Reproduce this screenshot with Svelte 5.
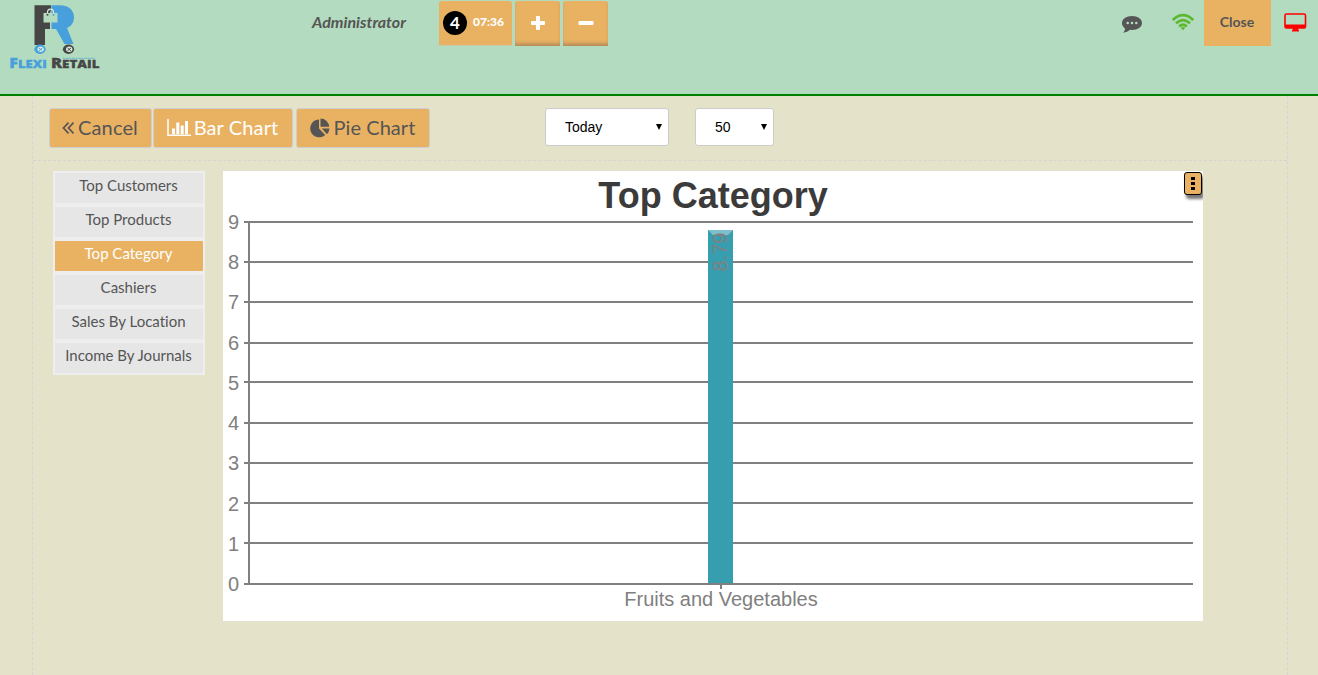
<script>
  const reports = ['Top Customers', 'Top Products', 'Top Category', 'Cashiers', 'Sales By Location', 'Income By Journals'];
  let active = $state('Top Category');
  const ticks = [
    { v: 9, y: 51, label: 58 }, { v: 8, y: 91, label: 98 }, { v: 7, y: 131, label: 138 }, { v: 6, y: 172, label: 179 },
    { v: 5, y: 211, label: 219 }, { v: 4, y: 252, label: 259 }, { v: 3, y: 292, label: 299 }, { v: 2, y: 332, label: 340 },
    { v: 1, y: 372, label: 380 }, { v: 0, y: 413, label: 420 }
  ];
</script>

<header>
  <svg class="logo" width="110" height="80" viewBox="0 0 110 80">
    <path d="M34.500 5.300H51V10l-1 3h-6v9h6v7H45V45H34.500z" fill="#464646" />
    <path d="M51.500 5.300H60c9 0 14 5 14 12 0 5-2.500 9-7 10.700L73.500 44H64.500l-8.500-15h-4.500z" fill="#479fdb" />
    <path d="M43.500 13h14v9.500h-14z" fill="#b3dbbf" />
    <path d="M47.500 14.500V12.500c0-4.500 6-4.500 6 0v2" fill="none" stroke="#d9eee0" stroke-width="1.200" />
    <circle cx="47.500" cy="14.800" r="1" fill="#464646" /><circle cx="53.500" cy="14.800" r="1" fill="#479fdb" />
    {#each [{ x: 40, c: '#479fdb' }, { x: 68.500, c: '#464646' }] as wheel}
      <ellipse cx={wheel.x} cy="49.300" rx="5.600" ry="4.700" fill={wheel.c} />
      <ellipse cx={wheel.x + 0.7} cy="49.300" rx="3.200" ry="2.700" fill="#d5ece0" />
      <path d="M{wheel.x - 1} 48l3.400 2.800m-3.400 0l3.400-2.800" stroke={wheel.c} stroke-width="1" />
    {/each}
    <g class="wordmark">
      <text x="9.300" y="67.700" font-size="13.500" fill="#479fdb" stroke="#479fdb" textLength="37.500" lengthAdjust="spacingAndGlyphs">F<tspan font-size="11">LEXI</tspan></text>
      <text x="51" y="67.700" font-size="13.500" fill="#464646" stroke="#464646" textLength="48.500" lengthAdjust="spacingAndGlyphs">R<tspan font-size="11">ETAIL</tspan></text>
    </g>
    <path d="M63 58.300h32" stroke="#479fdb" stroke-width="1.200" stroke-dasharray="2 .7 3 .5" opacity=".5" />
  </svg>
  <span class="user">Administrator</span>
  <div class="orders">
    <button class="order"><span class="num">4</span><span class="time">07:36</span></button>
    <button class="square" aria-label="New order"><svg width="16" height="16"><path d="M7 1h2q1 0 1 1v4h4q1 0 1 1v2q0 1-1 1h-4v4q0 1-1 1H7q-1 0-1-1v-4H2q-1 0-1-1V7q0-1 1-1h4V2q0-1 1-1z" fill="#fff" /></svg></button>
    <button class="square" aria-label="Remove order"><svg width="16" height="16"><rect x=".5" y="6" width="15" height="4" rx="1" fill="#fff" /></svg></button>
  </div>
  <div class="status">
    <svg class="chat" width="22" height="20" viewBox="0 0 22 20">
      <path d="M11 2c5.700 0 10 3.200 10 7s-4.300 7-10 7l-2-.2C7.500 17.300 5 18.500 2 18.800c1-1 1.800-2 2-4.300C2 13 1 11.200 1 9c0-3.800 4.300-7 10-7z" fill="#555" />
      <circle cx="6.700" cy="9" r="1.300" fill="#b3dbbf" /><circle cx="11" cy="9" r="1.300" fill="#b3dbbf" /><circle cx="15.300" cy="9" r="1.300" fill="#b3dbbf" />
    </svg>
    <svg class="wifi" width="24" height="18" viewBox="0 0 24 18">
      <g fill="none" stroke="#5cb830" stroke-width="2.800"><path d="M1.800 6.900q10.200-9.600 20.400 0M5 10.300q7-6.400 14 0M8.200 13.600q3.800-3.600 7.600 0" /></g>
      <path d="M9.700 14.800q2.300-1.800 4.600 0L12 17.300z" fill="#5cb830" />
    </svg>
    <button class="close">Close</button>
    <svg class="screen" width="24" height="20" viewBox="0 0 24 20">
      <rect x="2" y="2" width="20.500" height="14" rx="1.500" fill="none" stroke="#f00" stroke-width="1.600" />
      <path d="M2 12.500h20.500V16H2zM10 16h5l.5 2H16v1.500H9V18h.5z" fill="#f00" />
    </svg>
  </div>
</header>

<main>
  <div class="toolbar">
    <button class="tool"><svg width="13" height="14" viewBox="0 0 13 14"><path d="M6.500 1.700L1.500 7l5 5.300M11.500 1.700L6.500 7l5 5.300" fill="none" stroke="#555" stroke-width="1.700" /></svg><span>Cancel</span></button>
    <button class="tool bar"><svg width="24" height="18" viewBox="0 0 24 18"><path d="M1 0v16.300h23" fill="none" stroke="#fff" stroke-width="1.500" /><path d="M5 9.500h3V15H5zm4.300-6h3V15h-3zm4.400 3h3V15h-3zM18 2h3v13h-3z" fill="#fff" /></svg><span>Bar Chart</span></button>
    <button class="tool pie"><svg width="20" height="20" viewBox="0 0 20 20"><path d="M9 1.500V10.500l6.200 6.400A8.900 8.900 0 1 1 9 1.500z" fill="#555" /><path d="M10.500 .5a8.700 8.700 0 0 1 8.700 8.300h-8.700zM11.800 10.500h7.700a8.500 8.500 0 0 1-2.600 5.700z" fill="#555" /></svg><span>Pie Chart</span></button>
    <div class="select period"><span>Today</span><svg width="6" height="6"><path d="M0 0h6L3 6z" /></svg></div>
    <div class="select limit"><span>50</span><svg width="6" height="6"><path d="M0 0h6L3 6z" /></svg></div>
  </div>
  <div class="content">
    <nav>
      {#each reports as report}
        <button class:active={report === active} onclick={() => (active = report)}>{report}</button>
      {/each}
    </nav>
    <section>
      <svg class="chart" width="980" height="450" viewBox="0 0 980 450">
        <text class="title" x="490" y="37" text-anchor="middle">Top Category</text>
        {#each ticks as tick}
          <path d="M21 {tick.y}h949" stroke="#808080" stroke-width="2" />
          <text x="16" y={tick.label} text-anchor="end">{tick.v}</text>
        {/each}
        <path d="M26 51v362M498 413v5" stroke="#808080" stroke-width="2" />
        <path d="M485 59h25v353h-25z" fill="#379eaf" />
        <path d="M485 59h25l-5 5h-15z" fill="#7dbfca" />
        <text class="value" transform="translate(504 100.500) rotate(-90)">8.79</text>
        <text x="498" y="435" text-anchor="middle">Fruits and Vegetables</text>
      </svg>
      <button class="menu" aria-label="Chart menu"><i></i><i></i><i></i></button>
    </section>
  </div>
</main>

<style>
  :global(body) { margin: 0; background: #e4e2c9; overflow: hidden; }
  :global(*) { box-sizing: border-box; }
  button { border: 0; padding: 0; margin: 0; font-family: Lato, sans-serif; font-variant-ligatures: none; color: #555; background: #e9b263; }
  svg { display: block; flex: none; }
  header { display: flex; align-items: flex-start; height: 96px; background: #b3dbbf; border-bottom: 2px solid #008000; font-family: Lato, sans-serif; }
  .wordmark { font-family: "Open Sans", sans-serif; font-weight: 800; stroke-width: .3px; }
  .user { width: 127px; margin-left: 202px; padding-top: 12px; font: italic 700 16px/20px Lato, sans-serif; color: #555; }
  .orders { display: flex; gap: 3px; padding-top: 1px; }
  .order { display: flex; align-items: center; width: 73px; height: 44px; padding-left: 4px; gap: 6px; border-radius: 3px 3px 0 0; color: #fff; box-shadow: 0 1px #c9c6aa; }
  .num { width: 24px; height: 24px; border-radius: 50%; background: #000; font: 700 17px/24px Lato, sans-serif; }
  .time { font-size: 12px; font-weight: 900; line-height: 16px; padding-bottom: 2px; }
  .square { display: flex; align-items: center; justify-content: center; width: 45px; height: 45px; padding-bottom: 1px; border-radius: 3px 3px 0 0; box-shadow: inset 0 -4px 4px -2px #a98254; }
  .status { display: flex; margin-left: auto; }
  .chat { margin: 14px 28px 0 0; }
  .wifi { margin: 13px 9px 0 0; }
  .close { width: 67px; height: 46px; font-size: 14px; font-weight: 700; padding: 0 1px 3px 0; }
  .screen { margin: 12px 11px 0 12px; }
  main { width: 1256px; height: 579px; margin-left: 32px; border: 1px dashed #d5d5d5; border-width: 0 1px; }
  .toolbar { display: flex; height: 65px; padding: 12px 0 0 16px; border-bottom: 1px dashed #d5d5d5; }
  .tool { display: flex; align-items: center; justify-content: center; gap: 3px; width: 103px; height: 40px; margin-right: 1px; padding: 0 1px 1px 0; border: 1px solid #cecece; border-radius: 3px; font-size: 20px; letter-spacing: .12px; }
  .tool span { padding-bottom: 1px; }
  .bar { width: 140px; gap: 3px; margin-right: 3px; color: #fff; }
  .pie { width: 134px; gap: 4px; letter-spacing: .05px; }
  .select { display: flex; align-items: center; justify-content: space-between; height: 38px; padding: 0 6px 0 19px; border: 1px solid #ccc; border-radius: 3px; background: #fff; font: 14px "Liberation Sans", sans-serif; color: #000; }
  .period { width: 124px; margin-left: 114px; }
  .limit { width: 79px; margin-left: 26px; }
  .content { display: flex; align-items: flex-start; gap: 18px; padding: 10px 0 0 20px; }
  nav { display: flex; flex-direction: column; gap: 4px; width: 152px; padding: 2px; background: #eee; }
  nav button { height: 30px; padding: 0 1px 6px 0; background: #e6e6e6; font-size: 15px; line-height: 20px; white-space: nowrap; }
  nav .active { background: #e9b263; color: #fff; }
  section { position: relative; width: 980px; height: 450px; overflow: hidden; background: #fff; }
  .chart { font: 20px "Liberation Sans", sans-serif; fill: #808080; }
  .title { font-size: 36px; font-weight: 700; fill: #3b3b3b; }
  .value { font-size: 20px; }
  .menu { position: absolute; top: 1px; right: 1px; display: flex; flex-direction: column; align-items: center; justify-content: center; gap: 2px; width: 18px; height: 23px; border: 1px solid #000; border-radius: 3px; box-shadow: 2px 4px 3px #777; }
  .menu i { width: 4px; height: 3px; background: #000; }
</style>
